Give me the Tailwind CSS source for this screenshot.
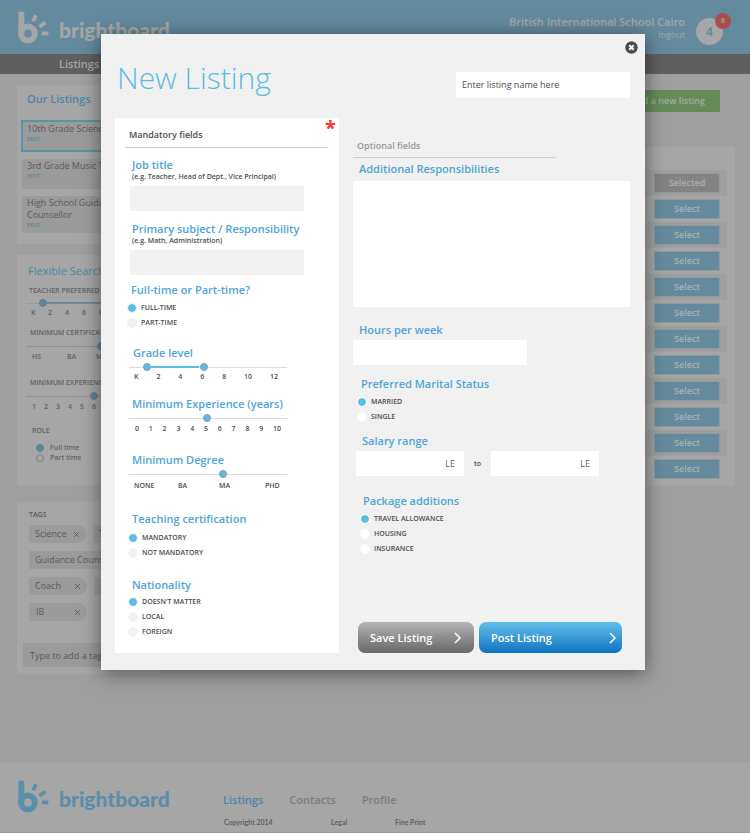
<!DOCTYPE html>
<html lang="en">
<head>
  <meta charset="UTF-8">
  <title>Brightboard - New Listing</title>
  <script src="https://cdn.jsdelivr.net/npm/@tailwindcss/browser@4"></script>
</head>
<body class="relative min-h-screen flex flex-col bg-white font-['Open_Sans',sans-serif] text-[#626262] overflow-x-hidden">

  <!-- Header -->
  <header class="h-[54px] bg-[#638b9d] text-[#a6a6a6] flex items-start justify-between pl-[18px] pr-[27px]">
    <a href="#" class="flex items-start gap-[10px] pt-[11px]">
      <svg class="shrink-0 w-[31px] h-[33px]" viewBox="54 32 94 98" fill="none" stroke="currentColor">
        <path d="M55 36q0-3 3-3h12q3 0 3 3v64H55z" fill="currentColor" stroke="none"/>
        <circle cx="84" cy="99" r="21" stroke-width="18"/>
        <path d="M100 62l8-18M119 79l18-13M126 99h20" stroke-width="11"/>
      </svg>
      <span class="font-['Lato',sans-serif] font-black text-[21px] leading-[24px] pt-[7px]">brightboard</span>
    </a>
    <div class="flex items-start gap-[11px]">
      <div class="text-right pt-[14px]">
        <p class="text-[11px] leading-[16px] font-semibold">British International School Cairo</p>
        <a href="#" class="block text-[9px] leading-[10px]">logout</a>
      </div>
      <div class="relative mt-[18px] size-[27px] rounded-full bg-[#a6a6a6] flex items-center justify-center text-[12px] font-semibold text-[#5788a0]">
        4
        <span class="absolute -top-[5px] -right-[8px] size-[16px] rounded-full bg-[#a84f4c] text-[#b5a5a5] text-[7px] flex items-center justify-center">8</span>
      </div>
    </div>
  </header>

  <nav class="h-[20px] bg-[#5f5f5f] text-[#a6a6a6] pl-[59px]">
    <a href="#" class="text-[11px] leading-[19px] font-semibold block">Listings</a>
  </nav>

  <main class="flex-1 bg-[#9f9f9f] flex justify-between items-start pl-[17px] pr-[15px] pt-[11px]">

    <aside class="w-[143px] flex flex-col gap-[11px] whitespace-nowrap">
      <section class="bg-[#a6a6a6] h-[159px] px-[4px] pt-[6px]">
        <h2 class="text-[11px] leading-[16px] font-semibold text-[#4c86a3] pl-[6px]">Our Listings</h2>
        <ul class="mt-[13px] flex flex-col gap-[7px] text-[9px] leading-[12px] font-medium text-[#5a5a5a]">
          <li class="h-[32px] border-2 border-[#5b93ab] bg-[#9b9b9b] pl-[4px] pt-px">10th Grade Science<a href="#" class="block text-[6px] leading-[8px] font-semibold text-[#4f8ba8]">EDIT</a></li>
          <li class="h-[30px] ml-px bg-[#9b9b9b] pl-[5px] pt-px">3rd Grade Music Teacher<a href="#" class="block text-[6px] leading-[8px] font-semibold text-[#4f8ba8]">EDIT</a></li>
          <li class="h-[37px] ml-px bg-[#9b9b9b] pl-[5px] pt-px">High School Guidance<br>Counsellor<a href="#" class="block text-[6px] leading-[8px] font-semibold text-[#4f8ba8]">EDIT</a></li>
        </ul>
      </section>

      <section class="bg-[#a6a6a6] h-[230px] pl-[9px] pt-[8px] text-[7px] leading-[10px] font-semibold overflow-hidden">
        <h2 class="text-[11px] leading-[16px] font-medium text-[#4c86a3] pl-[2px]">Flexible Search</h2>
        <label for="f-grade" class="block pl-[3px] mt-[7px]">TEACHER PREFERRED GRADE</label>
        <div class="mt-[2px] relative h-[10px] flex items-center">
          <span class="absolute left-[16px] right-0 h-[2px] bg-[#5788a0]"></span>
          <input id="f-grade" type="range" value="10" class="relative w-full h-[10px] appearance-none bg-transparent [&::-webkit-slider-runnable-track]:h-[1px] [&::-webkit-slider-runnable-track]:bg-[#8f8f8f]/60 [&::-webkit-slider-thumb]:appearance-none [&::-webkit-slider-thumb]:-mt-[4px] [&::-webkit-slider-thumb]:size-[8px] [&::-webkit-slider-thumb]:rounded-full [&::-webkit-slider-thumb]:bg-[#5788a0] [&::-webkit-slider-thumb]:border [&::-webkit-slider-thumb]:border-[#707f86]">
        </div>
        <div class="grid grid-cols-[17px_17px_17px_17px_17px] pl-[5px]"><span>K</span><span>2</span><span>4</span><span>6</span><span>8</span></div>
        <label for="f-cert" class="block pl-[4px] mt-[10px]">MINIMUM CERTIFICATION</label>
        <input id="f-cert" type="range" value="56" class="block mt-[3px] w-full h-[10px] appearance-none bg-transparent [&::-webkit-slider-runnable-track]:h-[1px] [&::-webkit-slider-runnable-track]:bg-[#8f8f8f] [&::-webkit-slider-thumb]:appearance-none [&::-webkit-slider-thumb]:-mt-[4px] [&::-webkit-slider-thumb]:size-[8px] [&::-webkit-slider-thumb]:rounded-full [&::-webkit-slider-thumb]:bg-[#5788a0] [&::-webkit-slider-thumb]:border [&::-webkit-slider-thumb]:border-[#707f86]">
        <div class="grid grid-cols-[35px_29px_29px] pl-[6px] mt-px"><span>HS</span><span>BA</span><span>MA</span></div>
        <label for="f-exp" class="block pl-[4px] mt-[16px]">MINIMUM EXPERIENCE</label>
        <input id="f-exp" type="range" value="51" class="block mt-[3px] w-full h-[10px] appearance-none bg-transparent [&::-webkit-slider-runnable-track]:h-[1px] [&::-webkit-slider-runnable-track]:bg-[#8f8f8f] [&::-webkit-slider-thumb]:appearance-none [&::-webkit-slider-thumb]:-mt-[4px] [&::-webkit-slider-thumb]:size-[8px] [&::-webkit-slider-thumb]:rounded-full [&::-webkit-slider-thumb]:bg-[#5788a0] [&::-webkit-slider-thumb]:border [&::-webkit-slider-thumb]:border-[#707f86]">
        <div class="grid grid-cols-[12px_12px_12px_12px_12px_12px] pl-[6px] mt-px"><span>1</span><span>2</span><span>3</span><span>4</span><span>5</span><span>6</span></div>
        <p class="pl-[6px] mt-[14px]">ROLE</p>
        <label class="flex items-center gap-[6px] pl-[10px] mt-[7px]"><input type="radio" name="role" checked class="appearance-none size-[8px] rounded-full border border-[#7d7d7d] checked:bg-[#5788a0]">Full time</label>
        <label class="flex items-center gap-[6px] pl-[10px]"><input type="radio" name="role" class="appearance-none size-[8px] rounded-full border border-[#7d7d7d] checked:bg-[#5788a0]">Part time</label>
      </section>

      <section class="bg-[#a6a6a6] mt-[6px] h-[172px] pl-[12px] pt-[8px] text-[9px] font-medium overflow-hidden text-[#5a5a5a]">
        <h2 class="text-[7px] leading-[10px] font-semibold">TAGS</h2>
        <div class="mt-[5px] flex flex-col gap-[8px]">
          <div class="flex gap-[7px]">
            <button class="w-[57px] h-[18px] rounded-l-[2px] rounded-r-full bg-[#9b9b9b] flex items-center justify-between pl-[6px] pr-[7px]">Science<svg class="size-[5px]" viewBox="0 0 6 6" stroke="currentColor"><path d="M0 0l6 6M6 0L0 6"/></svg></button>
            <button class="w-[57px] h-[18px] rounded-l-[2px] rounded-r-full bg-[#9b9b9b] text-left pl-[6px]">Teacher</button>
          </div>
          <button class="w-[114px] h-[18px] rounded-l-[2px] rounded-r-full bg-[#9b9b9b] text-left pl-[6px]">Guidance Counsellor</button>
          <div class="flex gap-[7px]">
            <button class="w-[58px] h-[18px] rounded-l-[2px] rounded-r-full bg-[#9b9b9b] flex items-center justify-between pl-[6px] pr-[7px]">Coach<svg class="size-[5px]" viewBox="0 0 6 6" stroke="currentColor"><path d="M0 0l6 6M6 0L0 6"/></svg></button>
            <button class="w-[57px] h-[18px] rounded-l-[2px] rounded-r-full bg-[#9b9b9b]"></button>
          </div>
          <button class="w-[58px] h-[18px] rounded-l-[2px] rounded-r-full bg-[#9b9b9b] flex items-center justify-between pl-[7px] pr-[7px]">IB<svg class="size-[5px]" viewBox="0 0 6 6" stroke="currentColor"><path d="M0 0l6 6M6 0L0 6"/></svg></button>
        </div>
        <input type="text" aria-label="Add a tag" placeholder="Type to add a tag" class="-ml-[6px] mt-[22px] w-[131px] h-[24px] bg-[#9b9b9b] pl-[7px] placeholder:text-[#5a5a5a]">
      </section>
    </aside>

    <section class="flex-1 ml-[14px] pt-[5px]">
      <div class="flex justify-end pr-[15px]">
        <button class="h-[22px] w-[110px] bg-[#658c58] text-[#a6a6a6] text-[9px] font-semibold text-right pr-[15px]">Add a new listing</button>
      </div>
      <ul id="rows" class="mt-[35px] h-[339px] bg-[#a6a6a6] pt-[23px] px-[8px] text-[9px] font-semibold"></ul>
    </section>
  </main>

  <!-- Footer -->
  <footer class="h-[70px] mb-[2px] bg-[#a6a6a6] border-b border-[#989898] flex items-start pl-[18px]">
    <a href="#" class="shrink-0 w-[153px] flex items-start gap-[10px] pt-[17px] text-[#5b8ea8]">
      <svg class="shrink-0 w-[31px] h-[33px]" viewBox="54 32 94 98" fill="none" stroke="currentColor">
        <path d="M55 36q0-3 3-3h12q3 0 3 3v64H55z" fill="currentColor" stroke="none"/>
        <circle cx="84" cy="99" r="21" stroke-width="18"/>
        <path d="M100 62l8-18M119 79l18-13M126 99h20" stroke-width="11"/>
      </svg>
      <span class="font-['Lato',sans-serif] font-black text-[21px] leading-[24px] pt-[7px]">brightboard</span>
    </a>
    <div class="ml-[52px] pt-[29px]">
      <div class="flex gap-[26px] text-[11px] leading-[16px] font-semibold text-[#7c7c7c]">
        <a href="#" class="text-[#4c86a3]">Listings</a>
        <a href="#">Contacts</a>
        <a href="#">Profile</a>
      </div>
      <div class="mt-[9px] pl-px grid grid-cols-[107px_64px_auto] font-['Lato',sans-serif] font-bold text-[7px] leading-[10px]">
        <span>Copyright 2014</span>
        <a href="#">Legal</a>
        <a href="#">Fine Print</a>
      </div>
    </div>
  </footer>

  <!-- New listing dialog -->
  <div class="absolute inset-x-0 top-[34px] pr-[4px]">
    <form role="dialog" aria-labelledby="dlg-title" class="relative mx-auto w-full max-w-[544px] bg-[#f1f1f1] pl-[14px] pr-[15px] pb-[17px] text-[#4d4d4d] text-[7px] leading-[10px] font-semibold shadow-[0_3px_18px_rgba(0,0,0,0.5)]">
      <button type="button" aria-label="Close" class="absolute top-[7px] right-[7px]">
        <svg class="size-[13px]" viewBox="0 0 13 13"><circle cx="6.500" cy="6.500" r="6.200" fill="#4a4a4a"/><path d="M4.300 4.300l4.400 4.400M8.700 4.300l-4.400 4.400" stroke="#fff" stroke-width="2"/></svg>
      </button>

      <div class="flex justify-between items-start h-[84px]">
        <h1 id="dlg-title" class="pl-[2px] pt-[24px] text-[30px] leading-[40px] font-light text-[#5bbce6]">New Listing</h1>
        <input type="text" aria-label="Listing name" placeholder="Enter listing name here" class="mt-[38px] w-[174px] h-[26px] bg-white pl-[6px] pb-[2px] text-[9px] font-normal placeholder:text-[#4d4d4d]">
      </div>

      <div class="flex items-stretch gap-[14px]">
        <!-- Mandatory -->
        <div class="relative w-[224px] bg-white px-[10px] pt-[9px] pb-[13px]">
          <span class="absolute -top-[2px] right-[3px] text-[20px] leading-[24px] font-bold text-[#f8322f]">*</span>
          <h2 class="w-[203px] border-b border-[#cfcfcf] pl-[4px] pb-[4px] text-[9px] leading-[16px]">Mandatory fields</h2>

          <label for="job" class="block mt-[10px] pl-[7px] text-[11px] leading-[14px] text-[#4fa5d5]">Job title</label>
          <p class="pl-[7px]">(e.g. Teacher, Head of Dept., Vice Principal)</p>
          <input id="job" type="text" class="block ml-[5px] mt-[4px] w-[174px] h-[25px] bg-[#f1f1f1]">

          <label for="subject" class="block mt-[11px] pl-[7px] text-[11px] leading-[14px] text-[#4fa5d5]">Primary subject / Responsibility</label>
          <p class="pl-[7px]">(e.g. Math, Administration)</p>
          <input id="subject" type="text" class="block ml-[5px] mt-[4px] w-[174px] h-[25px] bg-[#f1f1f1]">

          <fieldset class="mt-[8px]">
            <legend class="pl-[6px] text-[11px] leading-[14px] text-[#4fa5d5]">Full-time or Part-time?</legend>
            <label class="mt-[3px] ml-[2px] h-[15px] flex items-center gap-[4px]"><input type="radio" name="time" checked class="appearance-none size-[10px] rounded-full bg-[#f0f0f0] border border-[#f0f0f0] bg-clip-padding checked:bg-[#5bbce6]">FULL-TIME</label>
            <label class="ml-[2px] h-[15px] flex items-center gap-[4px]"><input type="radio" name="time" class="appearance-none size-[10px] rounded-full bg-[#f0f0f0] border border-[#f0f0f0] bg-clip-padding checked:bg-[#5bbce6]">PART-TIME</label>
          </fieldset>

          <label for="grade-from" class="block mt-[16px] pl-[8px] text-[11px] leading-[14px] text-[#4fa5d5]">Grade level</label>
          <div class="relative ml-[4px] mt-[2px] w-[158px] h-[10px]">
            <input id="grade-from" type="range" value="9" class="block w-full h-[10px] appearance-none bg-transparent [&::-webkit-slider-runnable-track]:h-[1px] [&::-webkit-slider-runnable-track]:bg-[#dcdcdc] [&::-webkit-slider-thumb]:appearance-none [&::-webkit-slider-thumb]:-mt-[4px] [&::-webkit-slider-thumb]:size-[8px] [&::-webkit-slider-thumb]:rounded-full [&::-webkit-slider-thumb]:bg-[#5bbce6] [&::-webkit-slider-thumb]:border [&::-webkit-slider-thumb]:border-[#8a9ba5]">
            <span class="absolute left-[21px] top-[4px] w-[49px] h-[2px] bg-[#5bbce6]"></span>
            <input type="range" aria-label="Highest grade" value="47" class="absolute inset-0 w-full h-[10px] appearance-none bg-transparent [&::-webkit-slider-runnable-track]:h-[1px] [&::-webkit-slider-thumb]:appearance-none [&::-webkit-slider-thumb]:-mt-[4px] [&::-webkit-slider-thumb]:size-[8px] [&::-webkit-slider-thumb]:rounded-full [&::-webkit-slider-thumb]:bg-[#5bbce6] [&::-webkit-slider-thumb]:border [&::-webkit-slider-thumb]:border-[#8a9ba5]">
          </div>
          <div class="ml-[9px] w-[144px] flex justify-between"><span>K</span><span>2</span><span>4</span><span>6</span><span>8</span><span>10</span><span>12</span></div>

          <label for="exp" class="block mt-[15px] pl-[7px] text-[11px] leading-[14px] text-[#4fa5d5]">Minimum Experience (years)</label>
          <input id="exp" type="range" value="49" class="block ml-[4px] mt-[2px] w-[158px] h-[10px] appearance-none bg-transparent [&::-webkit-slider-runnable-track]:h-[1px] [&::-webkit-slider-runnable-track]:bg-[#dcdcdc] [&::-webkit-slider-thumb]:appearance-none [&::-webkit-slider-thumb]:-mt-[4px] [&::-webkit-slider-thumb]:size-[8px] [&::-webkit-slider-thumb]:rounded-full [&::-webkit-slider-thumb]:bg-[#5bbce6] [&::-webkit-slider-thumb]:border [&::-webkit-slider-thumb]:border-[#8a9ba5]">
          <div class="ml-[10px] pt-px w-[146px] flex justify-between"><span>0</span><span>1</span><span>2</span><span>3</span><span>4</span><span>5</span><span>6</span><span>7</span><span>8</span><span>9</span><span>10</span></div>

          <label for="degree" class="block mt-[19px] pl-[7px] text-[11px] leading-[14px] text-[#4fa5d5]">Minimum Degree</label>
          <input id="degree" type="range" value="60" class="block ml-[4px] mt-[2px] w-[158px] h-[10px] appearance-none bg-transparent [&::-webkit-slider-runnable-track]:h-[1px] [&::-webkit-slider-runnable-track]:bg-[#dcdcdc] [&::-webkit-slider-thumb]:appearance-none [&::-webkit-slider-thumb]:-mt-[4px] [&::-webkit-slider-thumb]:size-[8px] [&::-webkit-slider-thumb]:rounded-full [&::-webkit-slider-thumb]:bg-[#5bbce6] [&::-webkit-slider-thumb]:border [&::-webkit-slider-thumb]:border-[#8a9ba5]">
          <div class="ml-[9px] pt-[2px] grid grid-cols-[44px_41px_46px_auto]"><span>NONE</span><span>BA</span><span>MA</span><span>PHD</span></div>

          <fieldset class="mt-[21px]">
            <legend class="pl-[7px] text-[11px] leading-[14px] text-[#4fa5d5]">Teaching certification</legend>
            <label class="mt-[4px] ml-[3px] h-[15px] flex items-center gap-[4px]"><input type="radio" name="cert" checked class="appearance-none size-[10px] rounded-full bg-[#f0f0f0] border border-[#f0f0f0] bg-clip-padding checked:bg-[#5bbce6]">MANDATORY</label>
            <label class="ml-[3px] h-[15px] flex items-center gap-[4px]"><input type="radio" name="cert" class="appearance-none size-[10px] rounded-full bg-[#f0f0f0] border border-[#f0f0f0] bg-clip-padding checked:bg-[#5bbce6]">NOT MANDATORY</label>
          </fieldset>

          <fieldset class="mt-[18px]">
            <legend class="pl-[7px] text-[11px] leading-[14px] text-[#4fa5d5]">Nationality</legend>
            <label class="mt-[2px] ml-[3px] h-[15px] flex items-center gap-[4px]"><input type="radio" name="nat" checked class="appearance-none size-[10px] rounded-full bg-[#f0f0f0] border border-[#f0f0f0] bg-clip-padding checked:bg-[#5bbce6]">DOESN'T MATTER</label>
            <label class="ml-[3px] h-[15px] flex items-center gap-[4px]"><input type="radio" name="nat" class="appearance-none size-[10px] rounded-full bg-[#f0f0f0] border border-[#f0f0f0] bg-clip-padding checked:bg-[#5bbce6]">LOCAL</label>
            <label class="mb-px ml-[3px] h-[15px] flex items-center gap-[4px]"><input type="radio" name="nat" class="appearance-none size-[10px] rounded-full bg-[#f0f0f0] border border-[#f0f0f0] bg-clip-padding checked:bg-[#5bbce6]">FOREIGN</label>
          </fieldset>
        </div>

        <!-- Optional -->
        <div class="flex-1 flex flex-col pt-[20px]">
          <h2 class="w-[203px] border-b border-[#cfcfcf] pl-[4px] pb-[3px] text-[9px] leading-[16px] text-[#999]">Optional fields</h2>

          <label for="resp" class="mt-[4px] pl-[6px] text-[11px] leading-[14px] text-[#4fa5d5]">Additional Responsibilities</label>
          <textarea id="resp" class="mt-[5px] h-[126px] bg-white resize-none"></textarea>

          <label for="hours" class="mt-[16px] pl-[6px] text-[11px] leading-[14px] text-[#4fa5d5]">Hours per week</label>
          <input id="hours" type="text" class="mt-[3px] w-[174px] h-[25px] bg-white">

          <fieldset class="mt-[12px]">
            <legend class="pl-[8px] text-[11px] leading-[14px] text-[#4fa5d5]">Preferred Marital Status</legend>
            <label class="mt-[3px] ml-[4px] h-[15px] flex items-center gap-[4px]"><input type="radio" name="marital" checked class="appearance-none size-[10px] rounded-full bg-white border border-white bg-clip-padding checked:bg-[#5bbce6]">MARRIED</label>
            <label class="ml-[4px] h-[15px] flex items-center gap-[4px]"><input type="radio" name="marital" class="appearance-none size-[10px] rounded-full bg-white border border-white bg-clip-padding checked:bg-[#5bbce6]">SINGLE</label>
          </fieldset>

          <label for="salary-from" class="mt-[10px] pl-[9px] text-[11px] leading-[14px] text-[#4fa5d5]">Salary range</label>
          <div class="ml-[3px] mt-[3px] flex items-center gap-[10px]">
            <input id="salary-from" type="text" placeholder="LE" class="w-[108px] h-[25px] bg-white text-right pr-[9px] text-[9px] font-normal placeholder:text-[#666]">
            <span>to</span>
            <input type="text" aria-label="Highest salary" placeholder="LE" class="w-[108px] h-[25px] bg-white text-right pr-[9px] text-[9px] font-normal placeholder:text-[#666]">
          </div>

          <fieldset class="mt-[18px]">
            <legend class="pl-[10px] text-[11px] leading-[14px] text-[#4fa5d5]">Package additions</legend>
            <label class="mt-[3px] ml-[7px] h-[15px] flex items-center gap-[4px]"><input type="checkbox" checked class="appearance-none size-[10px] rounded-full bg-white border border-white bg-clip-padding checked:bg-[#5bbce6]">TRAVEL ALLOWANCE</label>
            <label class="ml-[7px] h-[15px] flex items-center gap-[4px]"><input type="checkbox" class="appearance-none size-[10px] rounded-full bg-white border border-white bg-clip-padding checked:bg-[#5bbce6]">HOUSING</label>
            <label class="ml-[7px] h-[15px] flex items-center gap-[4px]"><input type="checkbox" class="appearance-none size-[10px] rounded-full bg-white border border-white bg-clip-padding checked:bg-[#5bbce6]">INSURANCE</label>
          </fieldset>

          <div class="mt-auto ml-[5px] flex gap-[5px] text-[11px] text-white">
            <button type="button" class="w-[116px] h-[31px] rounded-[7px] bg-linear-to-b from-[#b5b5b5] to-[#686868] flex items-center justify-between pl-[12px] pr-[13px]">Save Listing<svg class="w-[7px] h-[12px]" viewBox="0 0 7 12" fill="none" stroke="#fff" stroke-width="1.500"><path d="M1 1l5 5-5 5"/></svg></button>
            <button type="submit" class="w-[143px] h-[31px] rounded-[7px] bg-linear-to-b from-[#62bfe9] to-[#0673c1] flex items-center justify-between pl-[12px] pr-[6px]">Post Listing<svg class="w-[7px] h-[12px]" viewBox="0 0 7 12" fill="none" stroke="#fff" stroke-width="1.500"><path d="M1 1l5 5-5 5"/></svg></button>
          </div>
        </div>
      </div>
    </form>
  </div>

  <script>
    const rows = document.getElementById("rows");
    for (let i = 0; i < 12; i++) {
      const li = document.createElement("li");
      li.className = "h-[26px] flex justify-end items-center pr-[7px] " + (i % 2 === 0 ? "bg-[#9f9f9f]" : "");
      li.innerHTML = `<button class="w-[66px] h-[20px] border border-[#8d9a9f] text-[#a9b0b3] ${i === 0 ? "bg-[#838383]" : "bg-[#638b9d]"}">${i === 0 ? "Selected" : "Select"}</button>`;
      rows.appendChild(li);
    }
  </script>
</body>
</html>
